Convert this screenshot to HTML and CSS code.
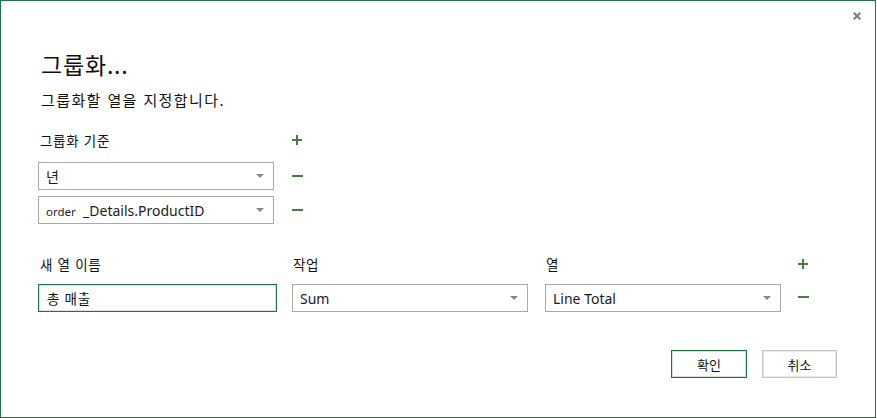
FILE: index.html
```html
<!DOCTYPE html>
<html lang="ko">
<head>
<meta charset="utf-8">
<title>그룹화</title>
<link rel="stylesheet" href="styles.css">
</head>
<body>
<div class="dialog">
  <div class="header">
    <span class="close" aria-label="닫기">
      <svg width="8" height="8" viewBox="0 0 8 8"><path d="M0.8 0.8L7.2 7.2M7.2 0.8L0.8 7.2" stroke="#7b7b7b" stroke-width="2" fill="none"/></svg>
    </span>
  </div>
  <div class="content">
    <div class="title">그룹화...</div>
    <div class="subtitle">그룹화할 열을 지정합니다.</div>

    <div class="group">
      <div class="grow label-row">
        <div class="field-w label">그룹화 기준</div>
        <span class="icon">
          <svg width="10" height="10" viewBox="0 0 10 10"><path d="M0 4h10v2H0zM4 0h2v10H4z" fill="#4b7a46"/></svg>
        </span>
      </div>
      <div class="grow row1">
        <div class="field-w select"><span class="val">년</span><span class="arrow"></span></div>
        <span class="icon">
          <svg width="11" height="10" viewBox="0 0 11 10"><path d="M0 4h11v2H0z" fill="#4b7a46"/></svg>
        </span>
      </div>
      <div class="grow row2">
        <div class="field-w select"><span class="val"><span class="small">order</span>&nbsp; _Details.ProductID</span><span class="arrow"></span></div>
        <span class="icon">
          <svg width="11" height="10" viewBox="0 0 11 10"><path d="M0 4h11v2H0z" fill="#4b7a46"/></svg>
        </span>
      </div>
    </div>

    <div class="agg">
      <div class="arow labels">
        <div class="c-name label">새 열 이름</div>
        <div class="c-op label">작업</div>
        <div class="c-col label">열</div>
        <span class="c-icon icon">
          <svg width="10" height="10" viewBox="0 0 10 10"><path d="M0 4h10v2H0zM4 0h2v10H4z" fill="#4b7a46"/></svg>
        </span>
      </div>
      <div class="arow fields">
        <div class="c-name input">총 매출</div>
        <div class="c-op select"><span class="val">Sum</span><span class="arrow"></span></div>
        <div class="c-col select"><span class="val">Line Total</span><span class="arrow"></span></div>
        <span class="c-icon icon minus-adj">
          <svg width="11" height="10" viewBox="0 0 11 10"><path d="M0 4h11v2H0z" fill="#4b7a46"/></svg>
        </span>
      </div>
    </div>

    <div class="buttons">
      <button class="btn primary">확인</button>
      <button class="btn">취소</button>
    </div>
  </div>
</div>
</body>
</html>
```

FILE: styles.css
```css
html, body {
  margin: 0;
  padding: 0;
  background: #ffffff;
}
body {
  font-family: "Noto Sans", "Noto Sans CJK KR", sans-serif;
  color: #1a1a1a;
}
.dialog {
  width: 876px;
  height: 418px;
  box-sizing: border-box;
  border: 1px solid #217346;
  background: #fff;
}
.header {
  height: 47px;
  display: flex;
  justify-content: flex-end;
  align-items: flex-start;
  padding-right: 14px;
}
.close {
  display: block;
  width: 8px;
  height: 8px;
  margin-top: 11px;
  line-height: 0;
}
.close svg { display: block; }
.content {
  padding-left: 37px;
  padding-right: 38px;
}
.title {
  font-family: "Noto Sans CJK KR", sans-serif;
  font-size: 23px;
  line-height: 32px;
  height: 32px;
  padding-left: 3px;
  letter-spacing: 0.8px;
  color: #111;
}
.subtitle {
  font-family: "Noto Sans CJK KR", sans-serif;
  font-size: 15px;
  line-height: 20px;
  height: 20px;
  margin-top: 10px;
  padding-left: 3px;
  letter-spacing: 1.4px;
  color: #111;
}
.label {
  font-family: "Noto Sans CJK KR", sans-serif;
  font-size: 13.5px;
  line-height: 20px;
  height: 20px;
  padding-left: 2px;
  box-sizing: border-box;
  letter-spacing: 0.7px;
  color: #111;
}
.group {
  margin-top: 20px;
}
.grow {
  display: flex;
  align-items: center;
}
.field-w {
  width: 236px;
  flex: none;
}
.grow .icon {
  margin-left: 18px;
}
.icon {
  display: flex;
  align-items: center;
  line-height: 0;
}
.row1 { margin-top: 12px; }
.row2 { margin-top: 6px; }
.select, .input {
  height: 28px;
  box-sizing: border-box;
  border: 1px solid #ababab;
  display: flex;
  align-items: center;
  justify-content: space-between;
  padding: 0 9px 0 7px;
  font-size: 14px;
  background: #fff;
  white-space: nowrap;
}
.val {
  font-family: "Noto Sans", "Noto Sans CJK KR", sans-serif;
  font-size: 14px;
  color: #1a1a1a;
}
.small {
  font-size: 11.5px;
}
.arrow {
  width: 0;
  height: 0;
  border-left: 4px solid transparent;
  border-right: 4px solid transparent;
  border-top: 4px solid #8a8a8a;
}
.input {
  border: 1px solid #217346;
  box-shadow: inset 0 0 0 1px #d4e4d9;
  font-family: "Noto Sans CJK KR", sans-serif;
  font-size: 13.5px;
  letter-spacing: 0.7px;
  padding-left: 8px;
  color: #111;
}
.agg {
  margin-top: 30px;
}
.arow {
  display: flex;
  align-items: center;
}
.c-name { width: 239px; flex: none; }
.c-op { width: 236px; flex: none; margin-left: 15px; }
.c-col { width: 236px; flex: none; margin-left: 17px; }
.c-icon { margin-left: 17px; }
.minus-adj { margin-bottom: 2px; }
.labels .c-op, .labels .c-col { padding-left: 1px; }
.fields { margin-top: 10px; }
.buttons {
  margin-top: 38px;
  display: flex;
  justify-content: flex-end;
  gap: 15px;
}
.btn {
  width: 75px;
  height: 28px;
  box-sizing: border-box;
  background: #fff;
  border: 1px solid #c4c4c4;
  box-shadow: inset 0 0 0 1px #e8e8e8;
  font-family: "Noto Sans CJK KR", sans-serif;
  font-size: 13px;
  color: #111;
  padding: 0;
  margin: 0;
}
.btn.primary {
  width: 76px;
  border-color: #217346;
  box-shadow: inset 0 0 0 1px #cfe2d5;
}
```
